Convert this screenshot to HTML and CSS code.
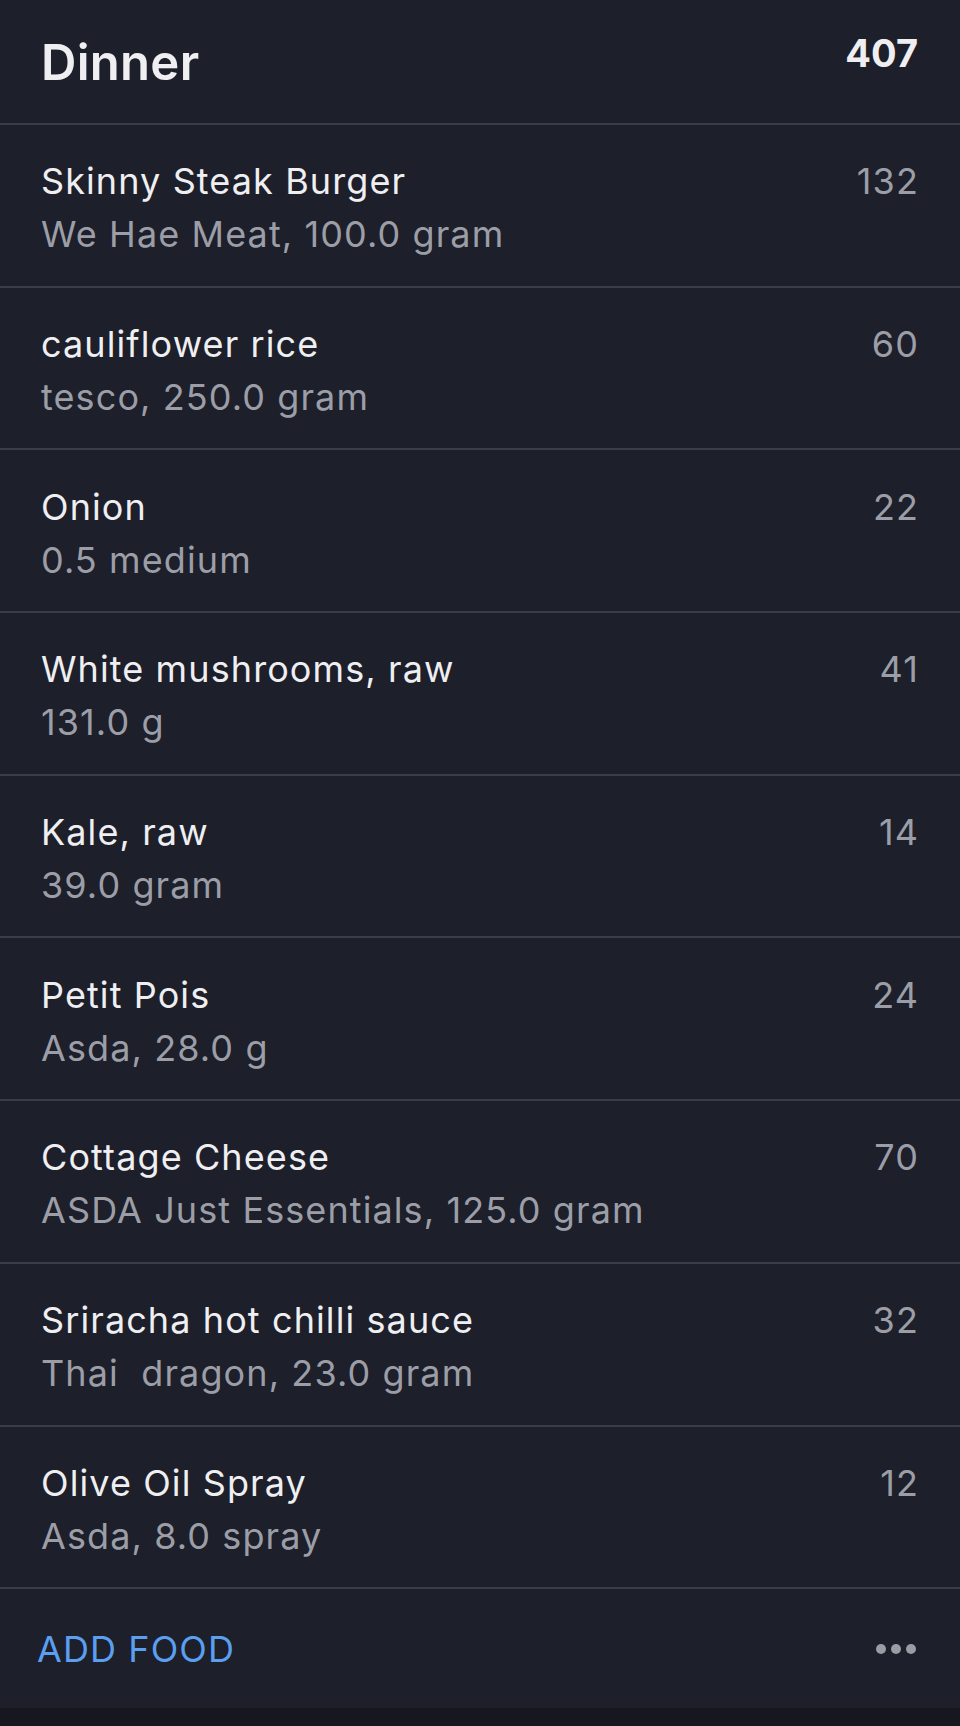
FILE: index.html
```html
<!doctype html>
<html>
<head lang="en">
	<meta charset="UTF-8">
	<meta name="viewport" content="width=device-width, initial-scale=1">
	<title>Dinner</title>
	<link rel="stylesheet" href="styles.css">
</head>
<body>

<section class="meal">
	<header class="meal__head">
		<h1 class="meal__title">Dinner</h1>
		<strong class="meal__total">407</strong>
	</header>

	<ul class="foods">
		<li class="food">
			<div class="food__text">
				<div class="food__name">Skinny Steak Burger</div>
				<div class="food__info">We Hae Meat, 100.0 gram</div>
			</div>
			<div class="food__kcal">132</div>
		</li>
		<li class="food">
			<div class="food__text">
				<div class="food__name">cauliflower rice</div>
				<div class="food__info">tesco, 250.0 gram</div>
			</div>
			<div class="food__kcal">60</div>
		</li>
		<li class="food">
			<div class="food__text">
				<div class="food__name">Onion</div>
				<div class="food__info">0.5 medium</div>
			</div>
			<div class="food__kcal">22</div>
		</li>
		<li class="food">
			<div class="food__text">
				<div class="food__name">White mushrooms, raw</div>
				<div class="food__info">131.0 g</div>
			</div>
			<div class="food__kcal">41</div>
		</li>
		<li class="food">
			<div class="food__text">
				<div class="food__name">Kale, raw</div>
				<div class="food__info">39.0 gram</div>
			</div>
			<div class="food__kcal">14</div>
		</li>
		<li class="food">
			<div class="food__text">
				<div class="food__name">Petit Pois</div>
				<div class="food__info">Asda, 28.0 g</div>
			</div>
			<div class="food__kcal">24</div>
		</li>
		<li class="food">
			<div class="food__text">
				<div class="food__name">Cottage Cheese</div>
				<div class="food__info">ASDA Just Essentials, 125.0 gram</div>
			</div>
			<div class="food__kcal">70</div>
		</li>
		<li class="food">
			<div class="food__text">
				<div class="food__name">Sriracha hot chilli sauce</div>
				<div class="food__info">Thai  dragon, 23.0 gram</div>
			</div>
			<div class="food__kcal">32</div>
		</li>
		<li class="food">
			<div class="food__text">
				<div class="food__name">Olive Oil Spray</div>
				<div class="food__info">Asda, 8.0 spray</div>
			</div>
			<div class="food__kcal">12</div>
		</li>
	</ul>

	<footer class="meal__foot">
		<a class="meal__add" href="#">ADD FOOD</a>
		<span class="meal__more"><i></i><i></i><i></i></span>
	</footer>
</section>

</body>
</html>
```

FILE: styles.css
```css
* {
	margin: 0;
	padding: 0;
	box-sizing: border-box;
}
body {
	background-color: #17181f;
	color: #efeff2;
	font-family: Inter, 'Noto Sans', sans-serif;
	min-height: 1726px;
}
.meal {
	background-color: #1d1f2a;
}
.meal__head {
	display: flex;
	justify-content: space-between;
	align-items: flex-start;
	padding: 30px 42px 28px 41px;
	border-bottom: 2px solid #3a3c47;
}
.meal__title {
	font-size: 49px;
	font-weight: 600;
	line-height: 65px;
	letter-spacing: 0.3px;
	color: #efeff2;
}
.meal__total {
	font-size: 38px;
	font-weight: 700;
	line-height: 46px;
	color: #efeff2;
}
.foods {
	list-style: none;
}
.food {
	display: flex;
	justify-content: space-between;
	align-items: flex-start;
	padding: 30.3px 42px 24.4px 41px;
	border-bottom: 2px solid #3a3c47;
	font-size: 36px;
	letter-spacing: 1.1px;
}
.food__name {
	line-height: 52px;
	color: #efeff2;
}
.food__info {
	line-height: 54px;
	color: #9c9ea7;
	white-space: pre;
}
.food__kcal {
	line-height: 52px;
	margin-right: -1px;
	color: #9c9ea7;
}
.meal__foot {
	display: flex;
	justify-content: space-between;
	align-items: center;
	height: 119px;
	padding: 0 44px 0 37px;
}
.meal__add {
	font-size: 36px;
	letter-spacing: 1.1px;
	color: #5b9ff0;
	text-decoration: none;
}
.meal__more {
	display: flex;
	gap: 5px;
}
.meal__more i {
	width: 10px;
	height: 10px;
	border-radius: 50%;
	background-color: #9a9ca4;
}
```
